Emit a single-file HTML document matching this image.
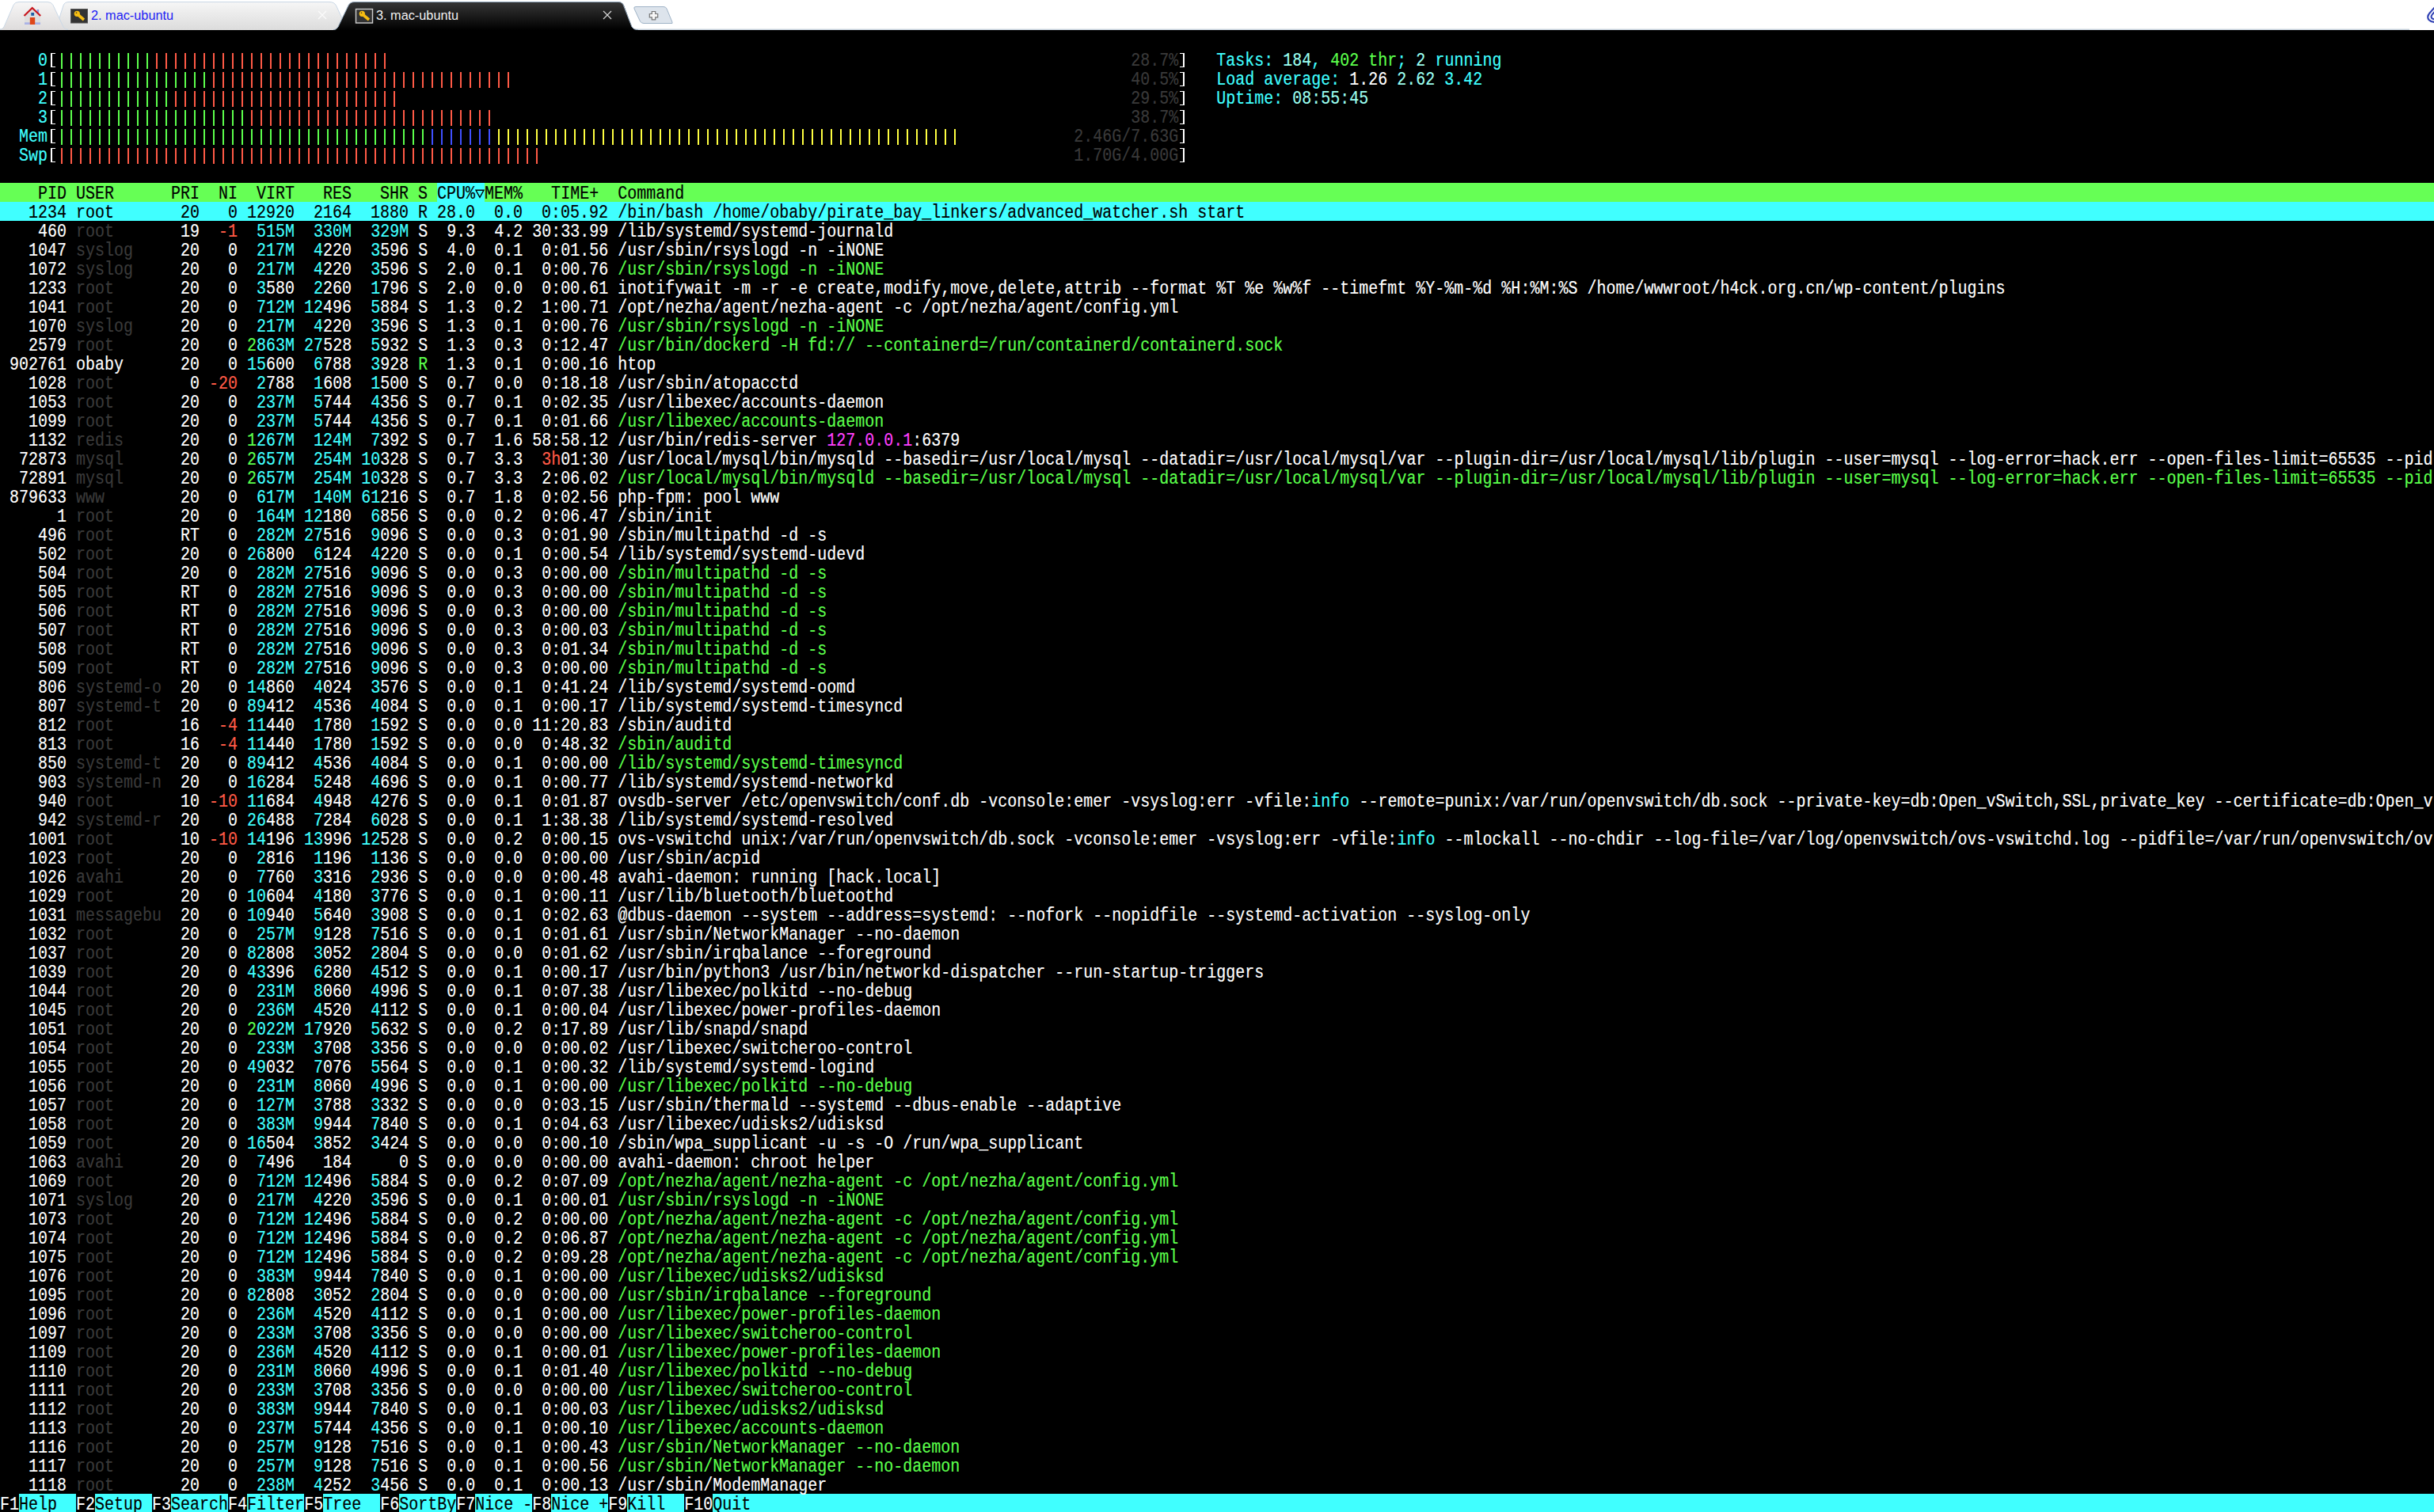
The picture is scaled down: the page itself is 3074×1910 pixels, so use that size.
<!DOCTYPE html>
<html><head><meta charset="utf-8"><style>
html,body{margin:0;padding:0}
body{width:3074px;height:1910px;overflow:hidden;background:#fff;position:relative}
#term{position:absolute;left:0;top:38px;width:3074px;height:1872px;background:#000;overflow:hidden}
.bg{position:absolute;height:24px}
.brk{position:absolute;box-sizing:border-box;width:5.5px;height:18px;border:0 solid #fff;border-top-width:1.6px;border-bottom-width:1.6px}
.bar{position:absolute;height:20px;background:repeating-linear-gradient(90deg,transparent 0,transparent 5px,var(--c) 5px,var(--c) 7px,transparent 7px,transparent 12px)}
.t{position:absolute;left:0;height:24px;font-family:"Liberation Mono",monospace;font-size:20px;line-height:24px;color:#ffffff;white-space:pre;-webkit-text-stroke:0.15px;transform:translateY(1px) scaleY(1.154);transform-origin:0 4px}
.W{color:#ffffff}
.C{color:#40ffff}
.LC{color:#9cfff0}
.G{color:#5cff4c}
.R{color:#ff5a46}
.Y{color:#ffff40}
.B{color:#4050ff}
.M{color:#ff40ff}
.D{color:#3a3a3a}
.K{color:#000000}
</style></head><body>
<svg id="tabbar" style="position:absolute;left:0;top:0" width="3074" height="38" viewBox="0 0 3074 38">
<defs>
<linearGradient id="gl" x1="0" y1="0" x2="0" y2="1"><stop offset="0" stop-color="#f7f6f6"/><stop offset="1" stop-color="#dedcdc"/></linearGradient>
<linearGradient id="gl2" x1="0" y1="0" x2="0" y2="1"><stop offset="0" stop-color="#f6f6f6"/><stop offset="1" stop-color="#dcdcdc"/></linearGradient>
<linearGradient id="gd" x1="0" y1="0" x2="0" y2="1"><stop offset="0" stop-color="#363636"/><stop offset="1" stop-color="#000"/></linearGradient>
</defs>
<rect x="0" y="0" width="3074" height="38" fill="#fff"/>
<rect x="0" y="36.5" width="3043" height="1.5" fill="#c8d3de"/>
<!-- tab 2 (inactive) -->
<path d="M70 38 L80 7 Q81.5 2.5 87 2.5 L416 2.5 Q422 2.5 424.5 7 L439 38 Z" fill="url(#gl2)"/><path d="M70 38 L80 7 Q81.5 2.5 87 2.5 L416 2.5 Q422 2.5 424.5 7 L439 38" fill="none" stroke="#c9d7e6" stroke-width="1"/>
<!-- home tab -->
<path d="M0 38 Q2.5 37.5 5 34 L17 6.5 Q18.5 2.5 24 2.5 L60 2.5 Q65 2.5 67 6.5 L80 34 Q82 37.5 86 38 Z" fill="url(#gl)"/><path d="M0 37.5 Q2.5 37.5 5 34 L17 6.5 Q18.5 2.5 24 2.5 L60 2.5 Q65 2.5 67 6.5 L80 34 Q82 37.5 86 37.5" fill="none" stroke="#cad8e6" stroke-width="1"/>
<!-- active tab 3 -->
<path d="M421 38 Q425 37.5 427 34 L440 7 Q442 2.5 448 2.5 L781 2.5 Q786 2.5 788 7 L798 34 Q800 37.5 806 38 Z" fill="url(#gd)"/><path d="M421 38 Q425 37.5 427 34 L440 7 Q442 2.5 448 2.5 L781 2.5 Q786 2.5 787.5 7 L798 34 Q800 37.5 806 38" fill="none" stroke="#8ea3b8" stroke-width="1"/>
<!-- new tab button -->
<path d="M801 11 Q800 8.5 803 8.5 L838 8.5 Q841 8.5 842 11 L849 28 L849 29.5 L813 29.5 Q810 29.5 808.5 27 Z" fill="#dde4ec" stroke="#9fb3c7" stroke-width="1"/>
<path d="M823.3 14.5 h4.4 v3 h3 v4.4 h-3 v3 h-4.4 v-3 h-3 v-4.4 h3 Z" fill="#f6f6f6" stroke="#747474" stroke-width="1.2"/>
<!-- home icon -->
<polygon points="31,20 40.7,11 51,20 51,31 31,31" fill="#dedede"/>
<rect x="31" y="28.3" width="20" height="2.7" fill="#aab2e6"/>
<rect x="46.5" y="12" width="2.6" height="4" fill="#8f9ae0"/>
<rect x="37.8" y="22" width="6.4" height="9" fill="#df4719"/>
<rect x="39.3" y="16" width="3.8" height="3.8" fill="#1d5fa6"/>
<polyline points="30.5,20 40.7,10 51.2,20" fill="none" stroke="#c8161e" stroke-width="2.2"/>
<!-- key icons -->
<rect x="89.5" y="11.5" width="21" height="17.5" fill="#333" stroke="#555" stroke-width="1"/>
<g fill="#f6bd12"><circle cx="97.3" cy="17.3" r="3.6"/><path d="M97.9 20.4 L104.9 26.4 L107.1 23.6 L100.1 17.6 Z"/></g>
<circle cx="96.5" cy="16.3" r="0.8" fill="#333"/>
<rect x="449.5" y="11.5" width="21" height="17.5" fill="#333" stroke="#cfcfcf" stroke-width="1.4"/>
<g fill="#f6bd12"><circle cx="457.3" cy="17.3" r="3.6"/><path d="M457.9 20.4 L464.9 26.4 L467.1 23.6 L460.1 17.6 Z"/></g>
<circle cx="456.5" cy="16.3" r="0.8" fill="#333"/>
<!-- close x -->
<path d="M402 14 L412 24 M412 14 L402 24" stroke="#fbfbfb" stroke-width="1.2"/>
<path d="M762 14 L772 24 M772 14 L762 24" stroke="#dcdcdc" stroke-width="1.2"/>
<text x="115" y="25" font-family="Liberation Sans" font-size="16.3" fill="#1e1ef5">2. mac-ubuntu</text>
<text x="475" y="25" font-family="Liberation Sans" font-size="16.3" fill="#f2f2f2">3. mac-ubuntu</text>
<!-- right icon -->
<path d="M3076 8 L3068.5 16.5 Q3064.5 21 3067.5 25 Q3070.5 28.3 3076 27.8" fill="none" stroke="#3142b4" stroke-width="2.1"/>
<path d="M3076 13.5 L3072 18 Q3069.6 21 3071.2 23 Q3072.8 24.6 3076 24.2" fill="none" stroke="#3142b4" stroke-width="2"/>
</svg>

<div id="term"></div>
<div class="brk" style="top:67px;left:64px;border-left-width:2px"></div><div class="bar" style="top:67px;left:72px;width:120px;--c:#5cff4c"></div><div class="bar" style="top:67px;left:192px;width:300px;--c:#ff5a46"></div><div class="brk" style="top:67px;left:1490px;border-right-width:2px"></div><div class="brk" style="top:91px;left:64px;border-left-width:2px"></div><div class="bar" style="top:91px;left:72px;width:192px;--c:#5cff4c"></div><div class="bar" style="top:91px;left:264px;width:384px;--c:#ff5a46"></div><div class="brk" style="top:91px;left:1490px;border-right-width:2px"></div><div class="brk" style="top:115px;left:64px;border-left-width:2px"></div><div class="bar" style="top:115px;left:72px;width:144px;--c:#5cff4c"></div><div class="bar" style="top:115px;left:216px;width:288px;--c:#ff5a46"></div><div class="brk" style="top:115px;left:1490px;border-right-width:2px"></div><div class="brk" style="top:139px;left:64px;border-left-width:2px"></div><div class="bar" style="top:139px;left:72px;width:240px;--c:#5cff4c"></div><div class="bar" style="top:139px;left:312px;width:312px;--c:#ff5a46"></div><div class="brk" style="top:139px;left:1490px;border-right-width:2px"></div><div class="brk" style="top:163px;left:64px;border-left-width:2px"></div><div class="bar" style="top:163px;left:72px;width:468px;--c:#5cff4c"></div><div class="bar" style="top:163px;left:540px;width:84px;--c:#4050ff"></div><div class="bar" style="top:163px;left:624px;width:588px;--c:#ffff40"></div><div class="brk" style="top:163px;left:1490px;border-right-width:2px"></div><div class="brk" style="top:187px;left:64px;border-left-width:2px"></div><div class="bar" style="top:187px;left:72px;width:612px;--c:#ff5a46"></div><div class="brk" style="top:187px;left:1490px;border-right-width:2px"></div><div class="bg" style="top:231px;left:0;width:3074px;background:#66ff55"></div><div class="bg" style="top:231px;left:552px;width:60px;background:#40ffff"></div><div class="bg" style="top:255px;left:0;width:3074px;background:#40ffff"></div><div class="bg" style="top:1887px;left:0;width:3074px;background:#40ffff"></div><div class="bg" style="top:1887px;left:0px;width:24px;background:#000"></div><div class="bg" style="top:1887px;left:24px;width:72px;background:#40ffff"></div><div class="bg" style="top:1887px;left:96px;width:24px;background:#000"></div><div class="bg" style="top:1887px;left:120px;width:72px;background:#40ffff"></div><div class="bg" style="top:1887px;left:192px;width:24px;background:#000"></div><div class="bg" style="top:1887px;left:216px;width:72px;background:#40ffff"></div><div class="bg" style="top:1887px;left:288px;width:24px;background:#000"></div><div class="bg" style="top:1887px;left:312px;width:72px;background:#40ffff"></div><div class="bg" style="top:1887px;left:384px;width:24px;background:#000"></div><div class="bg" style="top:1887px;left:408px;width:72px;background:#40ffff"></div><div class="bg" style="top:1887px;left:480px;width:24px;background:#000"></div><div class="bg" style="top:1887px;left:504px;width:72px;background:#40ffff"></div><div class="bg" style="top:1887px;left:576px;width:24px;background:#000"></div><div class="bg" style="top:1887px;left:600px;width:72px;background:#40ffff"></div><div class="bg" style="top:1887px;left:672px;width:24px;background:#000"></div><div class="bg" style="top:1887px;left:696px;width:72px;background:#40ffff"></div><div class="bg" style="top:1887px;left:768px;width:24px;background:#000"></div><div class="bg" style="top:1887px;left:792px;width:72px;background:#40ffff"></div><div class="bg" style="top:1887px;left:864px;width:36px;background:#000"></div><div class="bg" style="top:1887px;left:900px;width:72px;background:#40ffff"></div>
<svg style="position:absolute;left:599px;top:238px" width="14" height="13" viewBox="0 0 14 13"><path d="M2 2.3 L12 2.3 L7 11.3 Z" fill="none" stroke="#000" stroke-width="1.4" stroke-linejoin="miter"/></svg>
<div class="t" style="top:63px"><span class="C">    0</span>                                                                                                                  <span class="D">28.7%</span>    <span class="C">Tasks: </span><span class="LC">184</span><span class="C">, </span><span class="G">402 thr</span><span class="C">; </span><span class="LC">2</span><span class="C"> running</span></div><div class="t" style="top:87px"><span class="C">    1</span>                                                                                                                  <span class="D">40.5%</span>    <span class="C">Load average: </span>1.26 <span class="LC">2.62 </span><span class="C">3.42</span></div><div class="t" style="top:111px"><span class="C">    2</span>                                                                                                                  <span class="D">29.5%</span>    <span class="C">Uptime: </span><span class="LC">08:55:45</span></div><div class="t" style="top:135px"><span class="C">    3</span>                                                                                                                  <span class="D">38.7%</span>    </div><div class="t" style="top:159px"><span class="C">  Mem</span>                                                                                                            <span class="D">2.46G/7.63G</span>    </div><div class="t" style="top:183px"><span class="C">  Swp</span>                                                                                                            <span class="D">1.70G/4.00G</span>    </div><div class="t" style="top:231px"><span class="K">    PID USER      PRI  NI  VIRT   RES   SHR S </span><span class="K">CPU% </span><span class="K">MEM%   TIME+  Command</span></div><div class="t" style="top:255px"><span class="K">   1234 root       20   0 12920  2164  1880 R 28.0  0.0  0:05.92 /bin/bash /home/obaby/pirate_bay_linkers/advanced_watcher.sh start                                                                                                                             </span></div><div class="t" style="top:279px">    460 <span class="D">root      </span> 19 <span class="R"> -1 </span><span class="C"> 515M</span> <span class="C"> 330M</span> <span class="C"> 329M</span> S  9.3  4.2 30:33.99 /lib/systemd/systemd-journald</div><div class="t" style="top:303px">   1047 <span class="D">syslog    </span> 20   0 <span class="C"> 217M</span> <span class="C"> 4</span>220 <span class="C"> 3</span>596 S  4.0  0.1  0:01.56 /usr/sbin/rsyslogd -n -iNONE</div><div class="t" style="top:327px">   1072 <span class="D">syslog    </span> 20   0 <span class="C"> 217M</span> <span class="C"> 4</span>220 <span class="C"> 3</span>596 S  2.0  0.1  0:00.76 <span class="G">/usr/sbin/rsyslogd -n -iNONE</span></div><div class="t" style="top:351px">   1233 <span class="D">root      </span> 20   0 <span class="C"> 3</span>580 <span class="C"> 2</span>260 <span class="C"> 1</span>796 S  2.0  0.0  0:00.61 inotifywait -m -r -e create,modify,move,delete,attrib --format %T %e %w%f --timefmt %Y-%m-%d %H:%M:%S /home/wwwroot/h4ck.org.cn/wp-content/plugins</div><div class="t" style="top:375px">   1041 <span class="D">root      </span> 20   0 <span class="C"> 712M</span> <span class="C">12</span>496 <span class="C"> 5</span>884 S  1.3  0.2  1:00.71 /opt/nezha/agent/nezha-agent -c /opt/nezha/agent/config.yml</div><div class="t" style="top:399px">   1070 <span class="D">syslog    </span> 20   0 <span class="C"> 217M</span> <span class="C"> 4</span>220 <span class="C"> 3</span>596 S  1.3  0.1  0:00.76 <span class="G">/usr/sbin/rsyslogd -n -iNONE</span></div><div class="t" style="top:423px">   2579 <span class="D">root      </span> 20   0 <span class="G">2</span><span class="C">863M</span> <span class="C">27</span>528 <span class="C"> 5</span>932 S  1.3  0.3  0:12.47 <span class="G">/usr/bin/dockerd -H fd:// --containerd=/run/containerd/containerd.sock</span></div><div class="t" style="top:447px"> 902761 obaby      20   0 <span class="C">15</span>600 <span class="C"> 6</span>788 <span class="C"> 3</span>928 <span class="G">R </span> 1.3  0.1  0:00.16 htop</div><div class="t" style="top:471px">   1028 <span class="D">root      </span>  0 <span class="R">-20 </span><span class="C"> 2</span>788 <span class="C"> 1</span>608 <span class="C"> 1</span>500 S  0.7  0.0  0:18.18 /usr/sbin/atopacctd</div><div class="t" style="top:495px">   1053 <span class="D">root      </span> 20   0 <span class="C"> 237M</span> <span class="C"> 5</span>744 <span class="C"> 4</span>356 S  0.7  0.1  0:02.35 /usr/libexec/accounts-daemon</div><div class="t" style="top:519px">   1099 <span class="D">root      </span> 20   0 <span class="C"> 237M</span> <span class="C"> 5</span>744 <span class="C"> 4</span>356 S  0.7  0.1  0:01.66 <span class="G">/usr/libexec/accounts-daemon</span></div><div class="t" style="top:543px">   1132 <span class="D">redis     </span> 20   0 <span class="G">1</span><span class="C">267M</span> <span class="C"> 124M</span> <span class="C"> 7</span>392 S  0.7  1.6 58:58.12 /usr/bin/redis-server <span class="M">127.0.0.1</span>:6379</div><div class="t" style="top:567px">  72873 <span class="D">mysql     </span> 20   0 <span class="G">2</span><span class="C">657M</span> <span class="C"> 254M</span> <span class="C">10</span>328 S  0.7  3.3 <span class="R"> 3h</span>01:30 /usr/local/mysql/bin/mysqld --basedir=/usr/local/mysql --datadir=/usr/local/mysql/var --plugin-dir=/usr/local/mysql/lib/plugin --user=mysql --log-error=hack.err --open-files-limit=65535 --pid</div><div class="t" style="top:591px">  72891 <span class="D">mysql     </span> 20   0 <span class="G">2</span><span class="C">657M</span> <span class="C"> 254M</span> <span class="C">10</span>328 S  0.7  3.3  2:06.02 <span class="G">/usr/local/mysql/bin/mysqld --basedir=/usr/local/mysql --datadir=/usr/local/mysql/var --plugin-dir=/usr/local/mysql/lib/plugin --user=mysql --log-error=hack.err --open-files-limit=65535 --pid</span></div><div class="t" style="top:615px"> 879633 <span class="D">www       </span> 20   0 <span class="C"> 617M</span> <span class="C"> 140M</span> <span class="C">61</span>216 S  0.7  1.8  0:02.56 php-fpm: pool www</div><div class="t" style="top:639px">      1 <span class="D">root      </span> 20   0 <span class="C"> 164M</span> <span class="C">12</span>180 <span class="C"> 6</span>856 S  0.0  0.2  0:06.47 /sbin/init</div><div class="t" style="top:663px">    496 <span class="D">root      </span> RT   0 <span class="C"> 282M</span> <span class="C">27</span>516 <span class="C"> 9</span>096 S  0.0  0.3  0:01.90 /sbin/multipathd -d -s</div><div class="t" style="top:687px">    502 <span class="D">root      </span> 20   0 <span class="C">26</span>800 <span class="C"> 6</span>124 <span class="C"> 4</span>220 S  0.0  0.1  0:00.54 /lib/systemd/systemd-udevd</div><div class="t" style="top:711px">    504 <span class="D">root      </span> 20   0 <span class="C"> 282M</span> <span class="C">27</span>516 <span class="C"> 9</span>096 S  0.0  0.3  0:00.00 <span class="G">/sbin/multipathd -d -s</span></div><div class="t" style="top:735px">    505 <span class="D">root      </span> RT   0 <span class="C"> 282M</span> <span class="C">27</span>516 <span class="C"> 9</span>096 S  0.0  0.3  0:00.00 <span class="G">/sbin/multipathd -d -s</span></div><div class="t" style="top:759px">    506 <span class="D">root      </span> RT   0 <span class="C"> 282M</span> <span class="C">27</span>516 <span class="C"> 9</span>096 S  0.0  0.3  0:00.00 <span class="G">/sbin/multipathd -d -s</span></div><div class="t" style="top:783px">    507 <span class="D">root      </span> RT   0 <span class="C"> 282M</span> <span class="C">27</span>516 <span class="C"> 9</span>096 S  0.0  0.3  0:00.03 <span class="G">/sbin/multipathd -d -s</span></div><div class="t" style="top:807px">    508 <span class="D">root      </span> RT   0 <span class="C"> 282M</span> <span class="C">27</span>516 <span class="C"> 9</span>096 S  0.0  0.3  0:01.34 <span class="G">/sbin/multipathd -d -s</span></div><div class="t" style="top:831px">    509 <span class="D">root      </span> RT   0 <span class="C"> 282M</span> <span class="C">27</span>516 <span class="C"> 9</span>096 S  0.0  0.3  0:00.00 <span class="G">/sbin/multipathd -d -s</span></div><div class="t" style="top:855px">    806 <span class="D">systemd-o </span> 20   0 <span class="C">14</span>860 <span class="C"> 4</span>024 <span class="C"> 3</span>576 S  0.0  0.1  0:41.24 /lib/systemd/systemd-oomd</div><div class="t" style="top:879px">    807 <span class="D">systemd-t </span> 20   0 <span class="C">89</span>412 <span class="C"> 4</span>536 <span class="C"> 4</span>084 S  0.0  0.1  0:00.17 /lib/systemd/systemd-timesyncd</div><div class="t" style="top:903px">    812 <span class="D">root      </span> 16 <span class="R"> -4 </span><span class="C">11</span>440 <span class="C"> 1</span>780 <span class="C"> 1</span>592 S  0.0  0.0 11:20.83 /sbin/auditd</div><div class="t" style="top:927px">    813 <span class="D">root      </span> 16 <span class="R"> -4 </span><span class="C">11</span>440 <span class="C"> 1</span>780 <span class="C"> 1</span>592 S  0.0  0.0  0:48.32 <span class="G">/sbin/auditd</span></div><div class="t" style="top:951px">    850 <span class="D">systemd-t </span> 20   0 <span class="C">89</span>412 <span class="C"> 4</span>536 <span class="C"> 4</span>084 S  0.0  0.1  0:00.00 <span class="G">/lib/systemd/systemd-timesyncd</span></div><div class="t" style="top:975px">    903 <span class="D">systemd-n </span> 20   0 <span class="C">16</span>284 <span class="C"> 5</span>248 <span class="C"> 4</span>696 S  0.0  0.1  0:00.77 /lib/systemd/systemd-networkd</div><div class="t" style="top:999px">    940 <span class="D">root      </span> 10 <span class="R">-10 </span><span class="C">11</span>684 <span class="C"> 4</span>948 <span class="C"> 4</span>276 S  0.0  0.1  0:01.87 ovsdb-server /etc/openvswitch/conf.db -vconsole:emer -vsyslog:err -vfile:<span class="C">info</span> --remote=punix:/var/run/openvswitch/db.sock --private-key=db:Open_vSwitch,SSL,private_key --certificate=db:Open_v</div><div class="t" style="top:1023px">    942 <span class="D">systemd-r </span> 20   0 <span class="C">26</span>488 <span class="C"> 7</span>284 <span class="C"> 6</span>028 S  0.0  0.1  1:38.38 /lib/systemd/systemd-resolved</div><div class="t" style="top:1047px">   1001 <span class="D">root      </span> 10 <span class="R">-10 </span><span class="C">14</span>196 <span class="C">13</span>996 <span class="C">12</span>528 S  0.0  0.2  0:00.15 ovs-vswitchd unix:/var/run/openvswitch/db.sock -vconsole:emer -vsyslog:err -vfile:<span class="C">info</span> --mlockall --no-chdir --log-file=/var/log/openvswitch/ovs-vswitchd.log --pidfile=/var/run/openvswitch/ov</div><div class="t" style="top:1071px">   1023 <span class="D">root      </span> 20   0 <span class="C"> 2</span>816 <span class="C"> 1</span>196 <span class="C"> 1</span>136 S  0.0  0.0  0:00.00 /usr/sbin/acpid</div><div class="t" style="top:1095px">   1026 <span class="D">avahi     </span> 20   0 <span class="C"> 7</span>760 <span class="C"> 3</span>316 <span class="C"> 2</span>936 S  0.0  0.0  0:00.48 avahi-daemon: running [hack.local]</div><div class="t" style="top:1119px">   1029 <span class="D">root      </span> 20   0 <span class="C">10</span>604 <span class="C"> 4</span>180 <span class="C"> 3</span>776 S  0.0  0.1  0:00.11 /usr/lib/bluetooth/bluetoothd</div><div class="t" style="top:1143px">   1031 <span class="D">messagebu </span> 20   0 <span class="C">10</span>940 <span class="C"> 5</span>640 <span class="C"> 3</span>908 S  0.0  0.1  0:02.63 @dbus-daemon --system --address=systemd: --nofork --nopidfile --systemd-activation --syslog-only</div><div class="t" style="top:1167px">   1032 <span class="D">root      </span> 20   0 <span class="C"> 257M</span> <span class="C"> 9</span>128 <span class="C"> 7</span>516 S  0.0  0.1  0:01.61 /usr/sbin/NetworkManager --no-daemon</div><div class="t" style="top:1191px">   1037 <span class="D">root      </span> 20   0 <span class="C">82</span>808 <span class="C"> 3</span>052 <span class="C"> 2</span>804 S  0.0  0.0  0:01.62 /usr/sbin/irqbalance --foreground</div><div class="t" style="top:1215px">   1039 <span class="D">root      </span> 20   0 <span class="C">43</span>396 <span class="C"> 6</span>280 <span class="C"> 4</span>512 S  0.0  0.1  0:00.17 /usr/bin/python3 /usr/bin/networkd-dispatcher --run-startup-triggers</div><div class="t" style="top:1239px">   1044 <span class="D">root      </span> 20   0 <span class="C"> 231M</span> <span class="C"> 8</span>060 <span class="C"> 4</span>996 S  0.0  0.1  0:07.38 /usr/libexec/polkitd --no-debug</div><div class="t" style="top:1263px">   1045 <span class="D">root      </span> 20   0 <span class="C"> 236M</span> <span class="C"> 4</span>520 <span class="C"> 4</span>112 S  0.0  0.1  0:00.04 /usr/libexec/power-profiles-daemon</div><div class="t" style="top:1287px">   1051 <span class="D">root      </span> 20   0 <span class="G">2</span><span class="C">022M</span> <span class="C">17</span>920 <span class="C"> 5</span>632 S  0.0  0.2  0:17.89 /usr/lib/snapd/snapd</div><div class="t" style="top:1311px">   1054 <span class="D">root      </span> 20   0 <span class="C"> 233M</span> <span class="C"> 3</span>708 <span class="C"> 3</span>356 S  0.0  0.0  0:00.02 /usr/libexec/switcheroo-control</div><div class="t" style="top:1335px">   1055 <span class="D">root      </span> 20   0 <span class="C">49</span>032 <span class="C"> 7</span>076 <span class="C"> 5</span>564 S  0.0  0.1  0:00.32 /lib/systemd/systemd-logind</div><div class="t" style="top:1359px">   1056 <span class="D">root      </span> 20   0 <span class="C"> 231M</span> <span class="C"> 8</span>060 <span class="C"> 4</span>996 S  0.0  0.1  0:00.00 <span class="G">/usr/libexec/polkitd --no-debug</span></div><div class="t" style="top:1383px">   1057 <span class="D">root      </span> 20   0 <span class="C"> 127M</span> <span class="C"> 3</span>788 <span class="C"> 3</span>332 S  0.0  0.0  0:03.15 /usr/sbin/thermald --systemd --dbus-enable --adaptive</div><div class="t" style="top:1407px">   1058 <span class="D">root      </span> 20   0 <span class="C"> 383M</span> <span class="C"> 9</span>944 <span class="C"> 7</span>840 S  0.0  0.1  0:04.63 /usr/libexec/udisks2/udisksd</div><div class="t" style="top:1431px">   1059 <span class="D">root      </span> 20   0 <span class="C">16</span>504 <span class="C"> 3</span>852 <span class="C"> 3</span>424 S  0.0  0.0  0:00.10 /sbin/wpa_supplicant -u -s -O /run/wpa_supplicant</div><div class="t" style="top:1455px">   1063 <span class="D">avahi     </span> 20   0 <span class="C"> 7</span>496   184     0 S  0.0  0.0  0:00.00 avahi-daemon: chroot helper</div><div class="t" style="top:1479px">   1069 <span class="D">root      </span> 20   0 <span class="C"> 712M</span> <span class="C">12</span>496 <span class="C"> 5</span>884 S  0.0  0.2  0:07.09 <span class="G">/opt/nezha/agent/nezha-agent -c /opt/nezha/agent/config.yml</span></div><div class="t" style="top:1503px">   1071 <span class="D">syslog    </span> 20   0 <span class="C"> 217M</span> <span class="C"> 4</span>220 <span class="C"> 3</span>596 S  0.0  0.1  0:00.01 <span class="G">/usr/sbin/rsyslogd -n -iNONE</span></div><div class="t" style="top:1527px">   1073 <span class="D">root      </span> 20   0 <span class="C"> 712M</span> <span class="C">12</span>496 <span class="C"> 5</span>884 S  0.0  0.2  0:00.00 <span class="G">/opt/nezha/agent/nezha-agent -c /opt/nezha/agent/config.yml</span></div><div class="t" style="top:1551px">   1074 <span class="D">root      </span> 20   0 <span class="C"> 712M</span> <span class="C">12</span>496 <span class="C"> 5</span>884 S  0.0  0.2  0:06.87 <span class="G">/opt/nezha/agent/nezha-agent -c /opt/nezha/agent/config.yml</span></div><div class="t" style="top:1575px">   1075 <span class="D">root      </span> 20   0 <span class="C"> 712M</span> <span class="C">12</span>496 <span class="C"> 5</span>884 S  0.0  0.2  0:09.28 <span class="G">/opt/nezha/agent/nezha-agent -c /opt/nezha/agent/config.yml</span></div><div class="t" style="top:1599px">   1076 <span class="D">root      </span> 20   0 <span class="C"> 383M</span> <span class="C"> 9</span>944 <span class="C"> 7</span>840 S  0.0  0.1  0:00.00 <span class="G">/usr/libexec/udisks2/udisksd</span></div><div class="t" style="top:1623px">   1095 <span class="D">root      </span> 20   0 <span class="C">82</span>808 <span class="C"> 3</span>052 <span class="C"> 2</span>804 S  0.0  0.0  0:00.00 <span class="G">/usr/sbin/irqbalance --foreground</span></div><div class="t" style="top:1647px">   1096 <span class="D">root      </span> 20   0 <span class="C"> 236M</span> <span class="C"> 4</span>520 <span class="C"> 4</span>112 S  0.0  0.1  0:00.00 <span class="G">/usr/libexec/power-profiles-daemon</span></div><div class="t" style="top:1671px">   1097 <span class="D">root      </span> 20   0 <span class="C"> 233M</span> <span class="C"> 3</span>708 <span class="C"> 3</span>356 S  0.0  0.0  0:00.00 <span class="G">/usr/libexec/switcheroo-control</span></div><div class="t" style="top:1695px">   1109 <span class="D">root      </span> 20   0 <span class="C"> 236M</span> <span class="C"> 4</span>520 <span class="C"> 4</span>112 S  0.0  0.1  0:00.01 <span class="G">/usr/libexec/power-profiles-daemon</span></div><div class="t" style="top:1719px">   1110 <span class="D">root      </span> 20   0 <span class="C"> 231M</span> <span class="C"> 8</span>060 <span class="C"> 4</span>996 S  0.0  0.1  0:01.40 <span class="G">/usr/libexec/polkitd --no-debug</span></div><div class="t" style="top:1743px">   1111 <span class="D">root      </span> 20   0 <span class="C"> 233M</span> <span class="C"> 3</span>708 <span class="C"> 3</span>356 S  0.0  0.0  0:00.00 <span class="G">/usr/libexec/switcheroo-control</span></div><div class="t" style="top:1767px">   1112 <span class="D">root      </span> 20   0 <span class="C"> 383M</span> <span class="C"> 9</span>944 <span class="C"> 7</span>840 S  0.0  0.1  0:00.03 <span class="G">/usr/libexec/udisks2/udisksd</span></div><div class="t" style="top:1791px">   1113 <span class="D">root      </span> 20   0 <span class="C"> 237M</span> <span class="C"> 5</span>744 <span class="C"> 4</span>356 S  0.0  0.1  0:00.10 <span class="G">/usr/libexec/accounts-daemon</span></div><div class="t" style="top:1815px">   1116 <span class="D">root      </span> 20   0 <span class="C"> 257M</span> <span class="C"> 9</span>128 <span class="C"> 7</span>516 S  0.0  0.1  0:00.43 <span class="G">/usr/sbin/NetworkManager --no-daemon</span></div><div class="t" style="top:1839px">   1117 <span class="D">root      </span> 20   0 <span class="C"> 257M</span> <span class="C"> 9</span>128 <span class="C"> 7</span>516 S  0.0  0.1  0:00.56 <span class="G">/usr/sbin/NetworkManager --no-daemon</span></div><div class="t" style="top:1863px">   1118 <span class="D">root      </span> 20   0 <span class="C"> 238M</span> <span class="C"> 4</span>252 <span class="C"> 3</span>456 S  0.0  0.1  0:00.13 /usr/sbin/ModemManager</div><div class="t" style="top:1887px">F1<span class="K">Help  </span>F2<span class="K">Setup </span>F3<span class="K">Search</span>F4<span class="K">Filter</span>F5<span class="K">Tree  </span>F6<span class="K">SortBy</span>F7<span class="K">Nice -</span>F8<span class="K">Nice +</span>F9<span class="K">Kill  </span>F10<span class="K">Quit  </span></div>
</body></html>
